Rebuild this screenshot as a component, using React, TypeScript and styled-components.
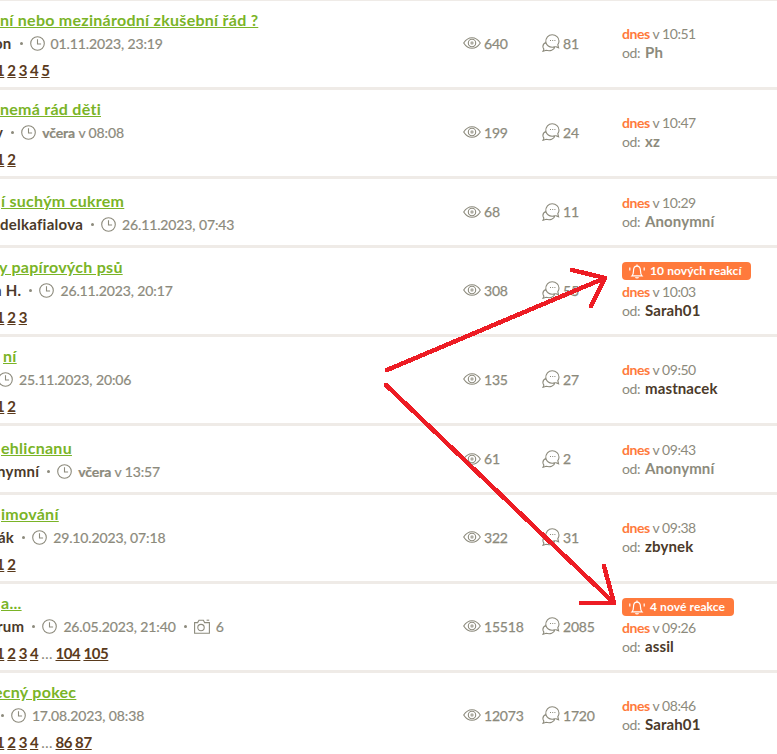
import { createGlobalStyle } from "styled-components";
import styled from "styled-components";

const GlobalStyle = createGlobalStyle`
  html, body {
    margin: 0;
    padding: 0;
    background: #fff;
    font-family: "Lato", "Liberation Sans", sans-serif;
  }
`;

const Page = styled.div`
  position: relative;
  width: 777px;
  height: 754px;
  overflow: hidden;
  border-top: 1px solid #efebe7;
  box-sizing: border-box;
`;

const Row = styled.div<{ $short?: boolean }>`
  box-sizing: border-box;
  display: grid;
  grid-template-columns: 463px 79px 80px 1fr;
  align-items: center;
  height: ${({ $short }) => ($short ? 69 : 89)}px;
  padding-bottom: ${({ $short }) => ($short ? 1 : 2)}px;
  border-bottom: 3px solid #efebe7;
`;

const Topic = styled.div<{ $short?: boolean }>`
  display: flex;
  flex-direction: column;
  align-self: start;
  min-width: 0;
  overflow: hidden;
  white-space: nowrap;
  padding-top: ${({ $short }) => ($short ? 11 : 8)}px;
`;

const Title = styled.a<{ $shift: number }>`
  height: 21px;
  margin-left: ${({ $shift }) => $shift}px;
  font-size: 16px;
  line-height: 21px;
  font-weight: 700;
  color: #7ab427;
  text-decoration: underline;
  letter-spacing: 0.27px;
`;

const Meta = styled.div<{ $shift: number }>`
  display: flex;
  align-items: center;
  height: 20px;
  margin-top: 3px;
  margin-left: ${({ $shift }) => $shift}px;
  font-size: 14px;
  color: #8c8a7c;
  letter-spacing: -0.12px;
  -webkit-text-stroke: 0.2px #8c8a7c;
`;

const Author = styled.span`
  font-size: 15px;
  font-weight: 700;
  color: #4b3a2a;
  letter-spacing: 0.25px;
  -webkit-text-stroke: 0;
`;

const Dot = styled.span`
  width: 3px;
  height: 3px;
  margin: 1px 7px 0 8px;
  border-radius: 50%;
  background: #8c8a7c;
`;

const IconBox = styled.svg<{ $gap?: number }>`
  flex: none;
  margin-right: ${({ $gap }) => $gap ?? 6}px;
  fill: none;
  stroke: #8c8a7c;
  stroke-width: 1.1;
`;

const Strong = styled.b`
  font-weight: 700;
`;

const Pages = styled.div<{ $shift: number }>`
  display: flex;
  gap: 3px;
  height: 20px;
  margin-top: 7px;
  margin-left: ${({ $shift }) => $shift}px;
  font-size: 15px;
  line-height: 20px;
  color: #8c8a7c;
`;

const PageLink = styled.a`
  font-weight: 700;
  color: #5a3a1c;
  text-decoration: underline;
  letter-spacing: -0.4px;
`;

const Stat = styled.div`
  display: flex;
  align-items: center;
  font-size: 14px;
  color: #8c8a7c;
  letter-spacing: -0.2px;
  -webkit-text-stroke: 0.25px #8c8a7c;
`;

const Last = styled.div`
  display: flex;
  flex-direction: column;
  align-items: flex-start;
  gap: 2px;
  padding-top: 1px;
  font-size: 14px;
  line-height: 16px;
  color: #8c8a7c;
  letter-spacing: -0.45px;
`;

const Today = styled.b`
  font-weight: 700;
  color: #ff7a3c;
`;

const LastBy = styled.b<{ $dark?: boolean }>`
  margin-left: 2px;
  font-size: 15px;
  font-weight: 700;
  letter-spacing: 0.1px;
  color: ${({ $dark }) => ($dark ? "#4b3a2a" : "#8c8a7c")};
`;

const Badge = styled.span`
  display: flex;
  align-items: center;
  gap: 4px;
  height: 18px;
  margin-bottom: 2px;
  padding: 0 9px 0 6px;
  border-radius: 4px;
  background: #ff7a3c;
  color: #fff;
  font-size: 12px;
  font-weight: 700;
  letter-spacing: 0.1px;
`;

const Arrows = styled.svg`
  position: absolute;
  left: 0;
  top: -1px;
  pointer-events: none;
  fill: none;
  stroke: #ed1c24;
  stroke-width: 4.5;
  stroke-linecap: round;
  stroke-linejoin: round;
  shape-rendering: crispEdges;
`;

const Clock = () => (
  <IconBox width="15" height="15" viewBox="0 0 15 15">
    <circle cx="7.500" cy="7.500" r="6.800" />
    <path d="M7.500 3.200V8h3.600" />
  </IconBox>
);

const Camera = () => (
  <IconBox width="16" height="15" viewBox="0 0 16 15" $gap={6}>
    <path d="M.6 3.600h3L5 1.200h4.400l1.200 2.400h4.800v10.600H.6z" />
    <circle cx="7" cy="8.600" r="3.200" />
    <path d="M12.600 1.200h2.600" />
  </IconBox>
);

const Eye = () => (
  <IconBox width="18" height="12" viewBox="0 0 18 12" $gap={3} strokeWidth="1.200">
    <path d="M.7 6C3 2.400 5.800.7 9 .7s6 1.700 8.300 5.300c-2.300 3.600-5.100 5.300-8.300 5.300S3 9.600.7 6z" />
    <circle cx="9" cy="6" r="3.700" />
    <circle cx="9" cy="6" r="1.700" fill="#8c8a7c" fillOpacity=".7" stroke="none" />
  </IconBox>
);

const Bubbles = () => (
  <IconBox width="18" height="18" viewBox="0 0 18 18" $gap={3} strokeWidth="1.200">
    <path d="M3.800 8.500C3.300 3.800 6.500.7 10.200.7c3.800 0 6.800 2.800 6.800 6.300 0 1.500-.4 2.700-1.200 3.700l.8 3.100-3.200-1.300" />
    <path d="M3.800 8.500C1.900 9.300.9 11 .9 12.600c0 1 .4 1.900 1 2.600L1 17.300l3.100-1c4 1.200 8.100-.1 8.700-3.400-3.600.9-7.400-.2-9-4.400z" />
    <path d="M8 6.500h1M10.200 6.500h1M12.400 6.500h1" />
  </IconBox>
);

const Bell = () => (
  <svg width="18" height="15" viewBox="0 0 18 15" fill="none" stroke="#fff" strokeWidth="1.200">
    <path d="M4 11.800h10c-1.200-1.200-1.500-2.300-1.500-4.800C12.500 3.800 11.200 2.200 9 2.200S5.500 3.800 5.500 7c0 2.500-.3 3.600-1.500 4.800z" />
    <path d="M7.500 13.200c.4.900 2.600.9 3 0M9 .6v1.600M1.800 3.500v3M16.200 3.500v3" />
  </svg>
);

interface TopicItem {
  title: string;
  titleShift: number;
  author?: string;
  metaShift: number;
  date: string;
  dateBold?: string;
  photos?: number;
  pages?: string[];
  views: number;
  replies: number;
  time: string;
  by: string;
  byDark?: boolean;
  badge?: string;
}

const topics: TopicItem[] = [
  { title: "ní nebo mezinárodní zkušební řád ?", titleShift: 0, author: "on", metaShift: -6, date: "01.11.2023, 23:19", pages: ["1", "2", "3", "4", "5"], views: 640, replies: 81, time: "10:51", by: "Ph" },
  { title: "nemá rád děti", titleShift: 0, author: "v", metaShift: -5, date: "v 08:08", dateBold: "včera", pages: ["1", "2"], views: 199, replies: 24, time: "10:47", by: "xz" },
  { title: "í suchým cukrem", titleShift: 1, author: "delkafialova", metaShift: 0, date: "26.11.2023, 07:43", views: 68, replies: 11, time: "10:29", by: "Anonymní" },
  { title: "y papírových psů", titleShift: -1, author: "a H.", metaShift: -6, date: "26.11.2023, 20:17", pages: ["1", "2", "3"], views: 308, replies: 55, time: "10:03", by: "Sarah01", byDark: true, badge: "10 nových reakcí" },
  { title: "ní", titleShift: 3, metaShift: -2, date: "25.11.2023, 20:06", pages: ["1", "2"], views: 135, replies: 27, time: "09:50", by: "mastnacek", byDark: true },
  { title: "ehlicnanu", titleShift: 1, author: "nymní", metaShift: -3, date: "v 13:57", dateBold: "včera", views: 61, replies: 2, time: "09:43", by: "Anonymní" },
  { title: "imování", titleShift: 1, author: "ák", metaShift: -2, date: "29.10.2023, 07:18", pages: ["1", "2"], views: 322, replies: 31, time: "09:38", by: "zbynek", byDark: true },
  { title: "a...", titleShift: 1, author: "rum", metaShift: -3, date: "26.05.2023, 21:40", photos: 6, pages: ["1", "2", "3", "4", "…", "104", "105"], views: 15518, replies: 2085, time: "09:26", by: "assil", byDark: true, badge: "4 nové reakce" },
  { title: "ecný pokec", titleShift: -6, author: "a", metaShift: -15, date: "17.08.2023, 08:38", pages: ["1", "2", "3", "4", "…", "86", "87"], views: 12073, replies: 1720, time: "08:46", by: "Sarah01", byDark: true },
];

const App = () => {
  return (
    <Page>
      <GlobalStyle />
      {topics.map((t) => (
        <Row key={t.time} $short={!t.pages}>
          <Topic $short={!t.pages}>
            <Title $shift={t.titleShift}>{t.title}</Title>
            <Meta $shift={t.metaShift}>
              {t.author && (
                <>
                  <Author>{t.author}</Author>
                  <Dot />
                </>
              )}
              <Clock />
              <span>
                {t.dateBold && <Strong>{t.dateBold} </Strong>}
                {t.date}
              </span>
              {t.photos && (
                <>
                  <Dot />
                  <Camera />
                  <span>{t.photos}</span>
                </>
              )}
            </Meta>
            {t.pages && (
              <Pages $shift={-4}>
                {t.pages.map((p) =>
                  p === "…" ? <span key={p}>…</span> : <PageLink key={p}>{p}</PageLink>
                )}
              </Pages>
            )}
          </Topic>
          <Stat>
            <Eye />
            {t.views}
          </Stat>
          <Stat>
            <Bubbles />
            {t.replies}
          </Stat>
          <Last>
            {t.badge && (
              <Badge>
                <Bell />
                {t.badge}
              </Badge>
            )}
            <span>
              <Today>dnes</Today> v {t.time}
            </span>
            <span>
              od: <LastBy $dark={t.byDark}>{t.by}</LastBy>
            </span>
          </Last>
        </Row>
      ))}
      <Arrows width="777" height="754" viewBox="0 0 777 754">
        <path d="M387 370L605 278M572 270L605 278L591 306" />
        <path d="M386 385L614 603M604 566L614 603L581 603" />
      </Arrows>
    </Page>
  );
};

export default App;
